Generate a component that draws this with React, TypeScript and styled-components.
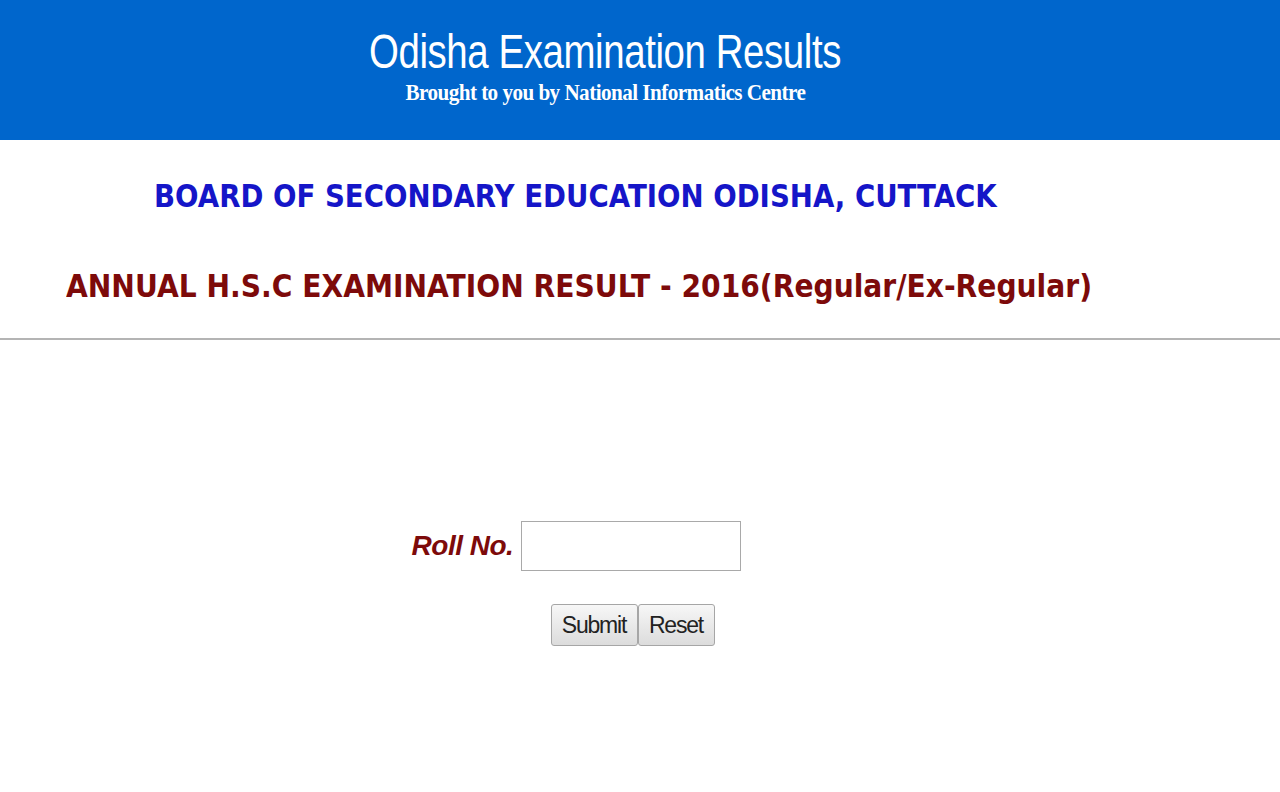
import { createGlobalStyle, styled } from "styled-components";

const GlobalStyle = createGlobalStyle`
  html, body {
    margin: 0;
    padding: 0;
    background: #ffffff;
  }
  body {
    font-family: "Liberation Sans", Arial, sans-serif;
  }
`;

const Header = styled.header`
  height: 140px;
  background: #0066cc;
  display: flex;
  flex-direction: column;
  align-items: center;
  padding-top: 26px;
  box-sizing: border-box;
  color: #ffffff;
`;

// the original banner uses a condensed face, so the sans is squeezed
const SiteTitle = styled.h1`
  margin: 0 0 0 -70px;
  font-family: "Liberation Sans", Arial, sans-serif;
  font-weight: 400;
  font-size: 48px;
  line-height: 52px;
  letter-spacing: -0.5px;
  transform: scaleX(0.8);
`;

const SiteSub = styled.div`
  margin: 2px 0 0 -70px;
  font-family: "Liberation Serif", "Times New Roman", serif;
  font-weight: 700;
  font-size: 23px;
  line-height: 26px;
  letter-spacing: -0.6px;
  transform: scaleX(0.92);
`;

const Board = styled.section`
  border-bottom: 2px solid #b4b4b4;
  padding: 36px 0 0;
  height: 200px;
  box-sizing: border-box;
`;

const Heading = styled.h2<{ $color: string; $indent: number; $squeeze: number }>`
  margin: 0 0 0 ${(p) => p.$indent}px;
  color: ${(p) => p.$color};
  font-family: "DejaVu Sans", Verdana, sans-serif;
  font-weight: 700;
  font-size: 32px;
  line-height: 40px;
  white-space: nowrap;
  transform: scaleX(${(p) => p.$squeeze});
  transform-origin: left center;
  & + & {
    margin-top: 50px;
  }
`;

const Form = styled.form`
  display: flex;
  flex-direction: column;
  align-items: center;
  padding-top: 181px;
`;

const Row = styled.div`
  display: flex;
  align-items: center;
  gap: 8px;
  margin-left: -127px;
`;

const Label = styled.label`
  color: #7d0a0a;
  font-family: "Liberation Sans", Arial, sans-serif;
  font-weight: 700;
  font-style: italic;
  font-size: 28px;
  letter-spacing: -0.5px;
`;

const Input = styled.input`
  width: 220px;
  height: 50px;
  box-sizing: border-box;
  border: 1px solid #a9a9a9;
  padding: 4px 6px;
  font-size: 20px;
`;

const Buttons = styled.div`
  display: flex;
  margin-top: 33px;
  margin-left: -15px;
`;

const Button = styled.button<{ $w: number }>`
  width: ${(p) => p.$w}px;
  height: 42px;
  padding: 0;
  border: 1px solid #a6a6a6;
  border-radius: 3px;
  background: linear-gradient(#f7f7f7, #dcdcdc);
  color: #222;
  font-family: "Liberation Sans", Arial, sans-serif;
  font-size: 23px;
  letter-spacing: -1.2px;
  box-sizing: border-box;
`;

export default function App() {
  return (
    <>
      <GlobalStyle />
      <Header>
        <SiteTitle>Odisha Examination Results</SiteTitle>
        <SiteSub>Brought to you by National Informatics Centre</SiteSub>
      </Header>
      <Board>
        <Heading $color="#1515c8" $indent={154} $squeeze={0.863} as="h2">
          BOARD OF SECONDARY EDUCATION ODISHA, CUTTACK
        </Heading>
        <Heading $color="#7d0a0a" $indent={66} $squeeze={0.88} as="h3">
          ANNUAL H.S.C EXAMINATION RESULT - 2016(Regular/Ex-Regular)
        </Heading>
      </Board>
      <Form onSubmit={(e) => e.preventDefault()}>
        <Row>
          <Label htmlFor="roll">Roll No.</Label>
          <Input id="roll" type="text" />
        </Row>
        <Buttons>
          <Button type="submit" $w={87}>Submit</Button>
          <Button type="reset" $w={77}>Reset</Button>
        </Buttons>
      </Form>
    </>
  );
}
